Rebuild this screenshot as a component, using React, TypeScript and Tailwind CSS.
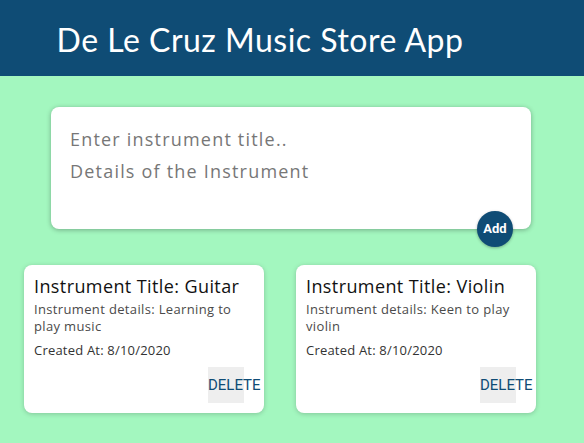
const notes = [
  { title: "Guitar", details: "Learning to play music", created: "8/10/2020" },
  { title: "Violin", details: "Keen to play violin", created: "8/10/2020" },
];

const App = () => {
  return (
    <div className="min-h-[443px] bg-[#a3f7bf] font-['Open_Sans',sans-serif]">
      <header className="h-[76px] bg-[#0f4c75] flex items-center justify-center pr-[64px]">
        <h1 className="text-white text-[32px] font-['Lato',sans-serif] tracking-[0.5px] pt-[3px]">
          De Le Cruz Music Store App
        </h1>
      </header>

      <div className="pt-[31px] flex justify-center pr-[2px]">
        <form className="relative w-[480px] h-[122px] bg-white rounded-lg shadow-[0_1px_5px_rgba(0,0,0,0.3)] px-[19px] pt-[16px]">
          <input
            type="text"
            placeholder="Enter instrument title.."
            className="block w-full text-[18px] leading-[32px] tracking-[1.2px] text-[#555] placeholder:text-[#777] outline-none"
          />
          <textarea
            placeholder="Details of the Instrument"
            rows={2}
            className="block w-full text-[18px] leading-[32px] tracking-[1.2px] text-[#555] placeholder:text-[#777] outline-none resize-none"
          />
          <button
            type="button"
            className="absolute right-[18px] bottom-[-18px] w-9 h-9 rounded-full bg-[#0f4c75] text-white text-[13px] font-bold font-['Roboto',sans-serif] shadow-[0_1px_3px_rgba(0,0,0,0.3)]"
          >
            Add
          </button>
        </form>
      </div>

      <div className="flex gap-8 pl-6 pt-9">
        {notes.map((note) => (
          <div
            key={note.title}
            className="w-[240px] h-[148px] bg-white rounded-lg shadow-[0_1px_5px_rgba(0,0,0,0.2)] px-[10px] pt-[8px] flex flex-col"
          >
            <h2 className="text-[18px] leading-[26px] tracking-[0.4px] text-[#111]">
              Instrument Title: {note.title}
            </h2>
            <p className="text-[13px] leading-[17px] tracking-[0.35px] text-[#4a4a4a] mt-[2px]">
              Instrument details: {note.details}
            </p>
            <p className="text-[13px] leading-[17px] tracking-[0.2px] text-[#333] mt-[7px]">
              Created At: {note.created}
            </p>
            <div className="flex justify-end mt-[8px] pr-[10px]">
              <div className="w-9 h-9 bg-[#eee] flex items-center">
                <span className="text-[15px] text-[#0f4c75] font-['Roboto',sans-serif] whitespace-nowrap">
                  DELETE
                </span>
              </div>
            </div>
          </div>
        ))}
      </div>
    </div>
  );
};

export default App;
